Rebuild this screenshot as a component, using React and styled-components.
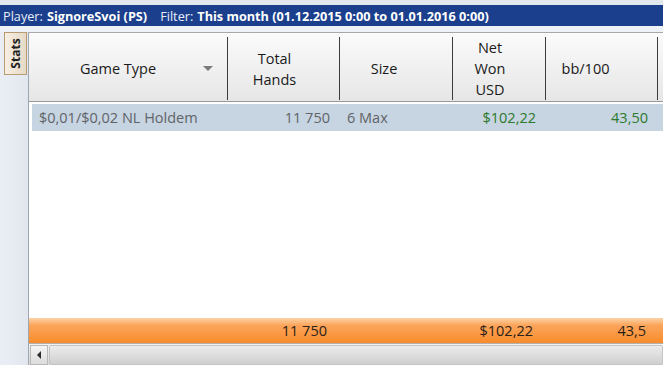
import styled, { createGlobalStyle } from "styled-components";

const GlobalStyle = createGlobalStyle`
  html, body { margin: 0; padding: 0; background: #ffffff; }
  body { font-family: "Open Sans", "Liberation Sans", sans-serif; }
`;

const COLS = "199px 112px 113px 93px 112px 1fr";

const Page = styled.div`
  width: 663px;
  height: 365px;
  display: flex;
  flex-direction: column;
  overflow: hidden;
  background: #e6ebf2;
`;

const TopStrip = styled.div`
  height: 5px;
  background: #e3e8ef;
`;

const FilterBar = styled.div`
  height: 21px;
  display: flex;
  align-items: center;
  gap: 4px;
  padding-left: 3px;
  background: #1b3f8c;
  color: #e8eef8;
  font-size: 12.7px;
  white-space: nowrap;

  b {
    color: #ffffff;
    font-weight: 700;
  }
`;

const Gap = styled.span`
  width: 5px;
`;

const Body = styled.div`
  flex: 1;
  display: flex;
  padding-top: 6px;
  background: linear-gradient(to bottom, #eef1f5, #e4e9f0);
  min-height: 0;
`;

const SideRail = styled.div`
  width: 28px;
  flex: 0 0 28px;
  display: flex;
  justify-content: flex-end;
  align-items: flex-start;
  background: linear-gradient(to right, #eaeef4, #e2e7ef);
`;

const StatsTab = styled.div`
  width: 23px;
  height: 43px;
  margin-right: 1px;
  box-sizing: border-box;
  border: 1px solid #b89b70;
  background: linear-gradient(to right, #f7efe3, #e6d9c6);
  display: flex;
  align-items: center;
  justify-content: center;

  span {
    transform: rotate(-90deg);
    font-size: 12px;
    font-weight: 700;
    color: #1e1e1e;
  }
`;

const GridPanel = styled.div`
  flex: 1;
  display: flex;
  flex-direction: column;
  background: #ffffff;
  border-left: 1px solid #9ea6b0;
  border-top: 1px solid #a8a8a8;
  min-width: 0;
`;

const HeaderRow = styled.div`
  height: 68px;
  display: grid;
  grid-template-columns: ${COLS};
  background: linear-gradient(to bottom, #fbfbfb, #e6e6e6);
  border-bottom: 1px solid #9a9a9a;
  font-size: 14.5px;
  color: #1a1a1a;
`;

const HeaderCell = styled.div`
  position: relative;
  display: flex;
  align-items: center;
  justify-content: center;
  text-align: center;
  line-height: 21px;
  margin: 4px 0 3px;
  padding-right: ${(p) => p.$pr || 0}px;
  border-right: ${(p) => (p.$last ? "none" : "1px solid #3c3c3c")};
`;

const SortArrow = styled.span`
  position: absolute;
  right: 14px;
  top: 29px;
  width: 0;
  height: 0;
  border-left: 5px solid transparent;
  border-right: 5px solid transparent;
  border-top: 5px solid #7a7a7a;
`;

const DataRow = styled.div`
  height: 27px;
  margin: 2px 0 0 3px;
  display: grid;
  grid-template-columns: 196px 112px 113px 93px 112px 1fr;
  align-items: center;
  background: #c7d4e1;
  font-size: 14.5px;
  color: #606468;
`;

const Cell = styled.div`
  text-align: ${(p) => (p.$right ? "right" : "left")};
  padding: ${(p) => (p.$right ? "0 10px 0 0" : "0 0 0 7px")};
  color: ${(p) => (p.$money ? "#2b7a2b" : "inherit")};
  white-space: nowrap;
`;

const Filler = styled.div`
  flex: 1;
`;

const FooterRow = styled.div`
  height: 25px;
  display: grid;
  grid-template-columns: ${COLS};
  align-items: center;
  background: linear-gradient(to bottom, #fcd2a6 0%, #fba45a 30%, #f98c2c 100%);
  border-bottom: 1px solid #b0b0b0;
  font-size: 14.5px;
  color: #2a2118;
`;

const FootCell = styled.div`
  text-align: right;
  padding-right: ${(p) => p.$pr || 12}px;
  white-space: nowrap;
`;

const Scrollbar = styled.div`
  height: 20px;
  display: flex;
  align-items: stretch;
  gap: 1px;
  padding: 1px 0 0 1px;
  background: linear-gradient(to bottom, #f2f2f2, #d9d9d9);
`;

const ScrollButton = styled.div`
  width: 18px;
  box-sizing: border-box;
  border: 1px solid #b8b8b8;
  background: linear-gradient(to bottom, #f5f5f5, #dcdcdc);
  display: flex;
  align-items: center;
  justify-content: center;

  &::before {
    content: "";
    border-top: 4px solid transparent;
    border-bottom: 4px solid transparent;
    border-right: 4px solid #2a2a2a;
  }
`;

const ScrollTrack = styled.div`
  flex: 1;
  border: 1px solid #c4c4c4;
  border-radius: 2px;
  background: linear-gradient(to bottom, #ececec, #cfcfcf);
`;

export default function App() {
  return (
    <Page>
      <GlobalStyle />
      <TopStrip />
      <FilterBar>
        <span>Player:</span>
        <b>SignoreSvoi (PS)</b>
        <Gap />
        <span>Filter:</span>
        <b>This month (01.12.2015 0:00 to 01.01.2016 0:00)</b>
      </FilterBar>
      <Body>
        <SideRail>
          <StatsTab>
            <span>Stats</span>
          </StatsTab>
        </SideRail>
        <GridPanel>
          <HeaderRow>
            <HeaderCell $pr={20}>
              Game Type
              <SortArrow />
            </HeaderCell>
            <HeaderCell $pr={18}>
              Total
              <br />
              Hands
            </HeaderCell>
            <HeaderCell $pr={24}>Size</HeaderCell>
            <HeaderCell $pr={18}>
              Net
              <br />
              Won
              <br />
              USD
            </HeaderCell>
            <HeaderCell $pr={32}>bb/100</HeaderCell>
            <HeaderCell $last />
          </HeaderRow>
          <DataRow>
            <Cell>$0,01/$0,02 NL Holdem</Cell>
            <Cell $right>11 750</Cell>
            <Cell>6 Max</Cell>
            <Cell $right $money>
              $102,22
            </Cell>
            <Cell $right $money>
              43,50
            </Cell>
            <Cell />
          </DataRow>
          <Filler />
          <FooterRow>
            <FootCell />
            <FootCell $pr={13}>11 750</FootCell>
            <FootCell />
            <FootCell $pr={13}>$102,22</FootCell>
            <FootCell $pr={12}>43,5</FootCell>
            <FootCell />
          </FooterRow>
          <Scrollbar>
            <ScrollButton />
            <ScrollTrack />
          </Scrollbar>
        </GridPanel>
      </Body>
    </Page>
  );
}
